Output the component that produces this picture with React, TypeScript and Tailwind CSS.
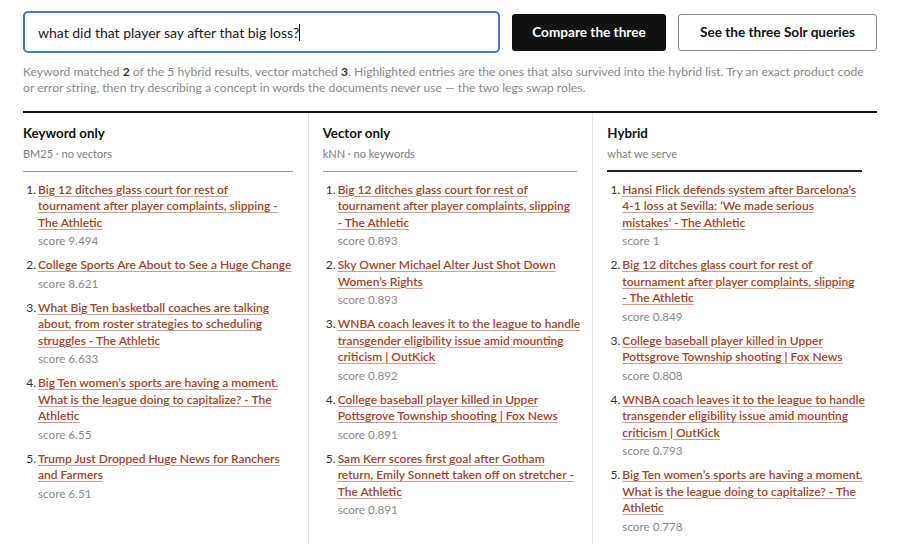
import React from "react";

type Item = { lines: string[]; score: string };

const keyword: Item[] = [
  { lines: ["Big 12 ditches glass court for rest of", "tournament after player complaints, slipping -", "The Athletic"], score: "9.494" },
  { lines: ["College Sports Are About to See a Huge Change"], score: "8.621" },
  { lines: ["What Big Ten basketball coaches are talking", "about, from roster strategies to scheduling", "struggles - The Athletic"], score: "6.633" },
  { lines: ["Big Ten women\u2019s sports are having a moment.", "What is the league doing to capitalize? - The", "Athletic"], score: "6.55" },
  { lines: ["Trump Just Dropped Huge News for Ranchers", "and Farmers"], score: "6.51" },
];

const vector: Item[] = [
  { lines: ["Big 12 ditches glass court for rest of", "tournament after player complaints, slipping", "- The Athletic"], score: "0.893" },
  { lines: ["Sky Owner Michael Alter Just Shot Down", "Women\u2019s Rights"], score: "0.893" },
  { lines: ["WNBA coach leaves it to the league to handle", "transgender eligibility issue amid mounting", "criticism | OutKick"], score: "0.892" },
  { lines: ["College baseball player killed in Upper", "Pottsgrove Township shooting | Fox News"], score: "0.891" },
  { lines: ["Sam Kerr scores first goal after Gotham", "return, Emily Sonnett taken off on stretcher -", "The Athletic"], score: "0.891" },
];

const hybrid: Item[] = [
  { lines: ["Hansi Flick defends system after Barcelona\u2019s", "4-1 loss at Sevilla: \u2018We made serious", "mistakes\u2019 - The Athletic"], score: "1" },
  { lines: ["Big 12 ditches glass court for rest of", "tournament after player complaints, slipping", "- The Athletic"], score: "0.849" },
  { lines: ["College baseball player killed in Upper", "Pottsgrove Township shooting | Fox News"], score: "0.808" },
  { lines: ["WNBA coach leaves it to the league to handle", "transgender eligibility issue amid mounting", "criticism | OutKick"], score: "0.793" },
  { lines: ["Big Ten women\u2019s sports are having a moment.", "What is the league doing to capitalize? - The", "Athletic"], score: "0.778" },
];

function Column({
  title,
  sub,
  items,
  rule,
  className,
}: {
  title: string;
  sub: string;
  items: Item[];
  rule: string;
  className: string;
}) {
  return (
    <div className={className}>
      <div className="pt-[11px] text-[13.3px] leading-[18px] font-bold text-[#111]">{title}</div>
      <div className="mt-[4px] text-[11px] leading-[16px] text-[#7d7d7d]">{sub}</div>
      <div className={rule} />
      <ol className="mt-[9.5px] flex flex-col gap-[9px]">
        {items.map((it, i) => (
          <li key={i} className="flex text-[12px] leading-[16.5px]">
            <span className="w-[15px] shrink-0 text-[#333] text-right pr-[2px]">{i + 1}.</span>
            <div className="min-w-0 flex-1">
              <a
                href="#"
                className="whitespace-nowrap font-semibold text-[#a0452a] underline decoration-[#d19e8b] underline-offset-[2px]"
              >
                {it.lines.map((l, j) => (
                  <React.Fragment key={j}>
                    {j > 0 && <br />}
                    {l}
                  </React.Fragment>
                ))}
              </a>
              <div className="mt-[1px] text-[11.7px] leading-[16px] text-[#8a8a8a]">score {it.score}</div>
            </div>
          </li>
        ))}
      </ol>
    </div>
  );
}

export default function App() {
  return (
    <div
      className="w-[900px] h-[544px] overflow-hidden bg-white px-[23px] pt-[11px] text-[#111]"
      style={{ fontFamily: "Lato, 'Liberation Sans', sans-serif" }}
    >
      <div className="flex items-center gap-[12px]">
        <div className="w-[477px] h-[42px] border-2 border-[#4d74c4] rounded-[5px] px-[13px] flex items-center text-[14px] text-[#1a1a1a]">
          what did that player say after that big loss?
          <span className="inline-block w-[1px] h-[17px] bg-[#111]" />
        </div>
        <button className="w-[154px] h-[37px] bg-[#121212] text-white text-[13.6px] font-bold rounded-[3px]">
          Compare the three
        </button>
        <button className="w-[199px] h-[37px] border border-[#8a8a8a] text-[#111] text-[13.6px] font-bold rounded-[3px] bg-white">
          See the three Solr queries
        </button>
      </div>
      <p className="mt-[11px] whitespace-nowrap text-[12.15px] leading-[16px] text-[#8a8a8a]">
        Keyword matched <b className="font-bold text-[#333]">2</b> of the 5 hybrid results, vector matched{" "}
        <b className="font-bold text-[#333]">3</b>. Highlighted entries are the ones that also survived into the hybrid list. Try an exact product code
        <br />
        or error string, then try describing a concept in words the documents never use — the two legs swap roles.
      </p>
      <div className="mt-[15px] h-[2px] bg-[#111]" />
      <div className="grid grid-cols-3 h-[440px]">
        <Column
          title="Keyword only"
          sub="BM25 · no vectors"
          items={keyword}
          rule="mt-[9px] h-[1px] bg-[#9a9a9a]"
          className="pr-[15px]"
        />
        <Column
          title="Vector only"
          sub="kNN · no keywords"
          items={vector}
          rule="mt-[9px] h-[1px] bg-[#c98a72]"
          className="border-l border-[#e6e6e6] pl-[14px] pr-[15px]"
        />
        <Column
          title="Hybrid"
          sub="what we serve"
          items={hybrid}
          rule="mt-[8px] h-[2px] bg-[#222]"
          className="border-l border-[#e6e6e6] pl-[14px] pr-[15px]"
        />
      </div>
    </div>
  );
}
